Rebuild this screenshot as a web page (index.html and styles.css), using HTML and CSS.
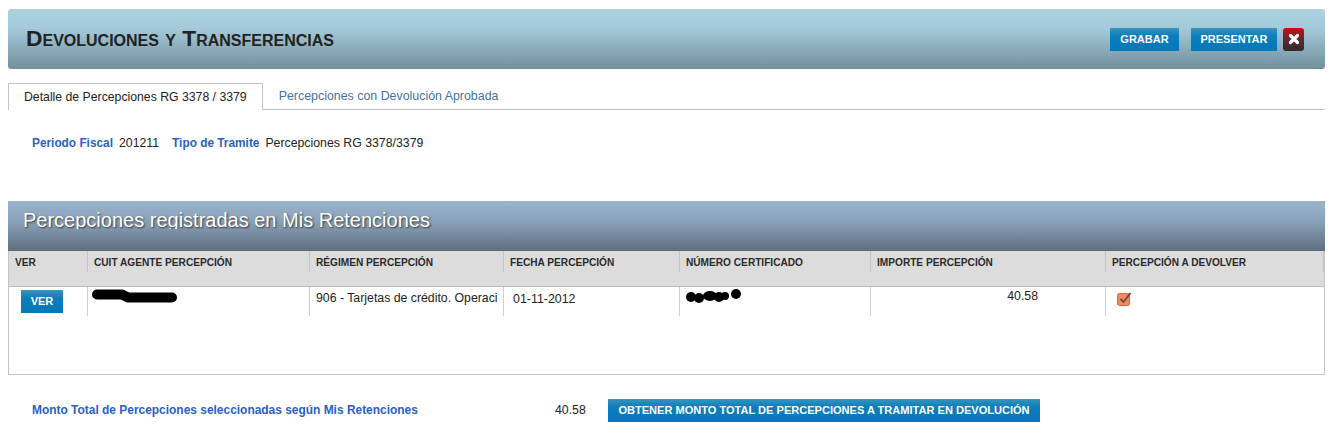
FILE: index.html
```html
<!DOCTYPE html>
<html lang="es">
<head>
    <meta charset="UTF-8">
    <meta name="viewport" content="width=device-width, initial-scale=1.0">
    <title>Devoluciones y Transferencias</title>
    <link rel="stylesheet" href="styles.css">
</head>
<body>
    <div class="page-header">
        <h1 class="page-title">Devoluciones y Transferencias</h1>
        <div class="header-actions">
            <a href="#" class="btn btn-grabar">GRABAR</a>
            <a href="#" class="btn btn-presentar">PRESENTAR</a>
            <a href="#" class="btn-close" aria-label="Cerrar">
                <svg width="14" height="14" viewBox="0 0 14 14"><path d="M3.5 3.5L10.5 10.5M10.5 3.5L3.5 10.5" stroke="#fff" stroke-width="3.2" stroke-linecap="round"/></svg>
            </a>
        </div>
    </div>

    <div class="tabs">
        <a href="#" class="tab active">Detalle de Percepciones RG 3378 / 3379</a>
        <a href="#" class="tab">Percepciones con Devolución Aprobada</a>
    </div>

    <div class="filters">
        <span class="label">Periodo Fiscal</span>
        <span class="value">201211</span>
        <span class="label label-tipo">Tipo de Tramite</span>
        <span class="value">Percepciones RG 3378/3379</span>
    </div>

    <div class="section-title"><span class="section-text">Percepciones registradas en Mis Retenciones</span></div>

    <div class="grid-box">
        <div class="grid-row grid-head">
            <div class="th">VER</div>
            <div class="th">CUIT AGENTE PERCEPCIÓN</div>
            <div class="th">RÉGIMEN PERCEPCIÓN</div>
            <div class="th">FECHA PERCEPCIÓN</div>
            <div class="th">NÚMERO CERTIFICADO</div>
            <div class="th">IMPORTE PERCEPCIÓN</div>
            <div class="th">PERCEPCIÓN A DEVOLVER</div>
        </div>
        <div class="grid-row grid-body">
            <div class="td td-ver"><a href="#" class="btn btn-ver">VER</a></div>
            <div class="td td-blob">
                <svg width="86" height="14" viewBox="0 0 86 14"><path d="M5 5.5H30L36 8.5H80" stroke="#000" stroke-width="10" stroke-linecap="round" stroke-linejoin="round" fill="none"/></svg>
            </div>
            <div class="td td-regimen"><span class="clip">906 - Tarjetas de crédito. Operaciones</span></div>
            <div class="td td-fecha">01-11-2012</div>
            <div class="td td-blob-cert">
                <svg width="58" height="16" viewBox="0 0 58 16"><g fill="#000"><circle cx="5" cy="9" r="5"/><circle cx="13" cy="10" r="5"/><ellipse cx="24" cy="8" rx="7" ry="5"/><circle cx="33" cy="9" r="5"/><circle cx="39" cy="8" r="4"/><circle cx="50" cy="6" r="5"/></g></svg>
            </div>
            <div class="td td-importe">40.58</div>
            <div class="td td-check">
                <svg width="15" height="15" viewBox="0 0 15 15"><rect x="0.5" y="2.5" width="12" height="12" rx="2" fill="#ee8a5c" stroke="#d9673a"/><path d="M3.5 8L6.5 11L13.5 2" stroke="#6b4a3e" stroke-width="1.8" fill="none"/></svg>
            </div>
        </div>
    </div>

    <div class="totals">
        <span class="label total-label">Monto Total de Percepciones seleccionadas según Mis Retenciones</span>
        <span class="value total-value">40.58</span>
        <a href="#" class="btn btn-total">OBTENER MONTO TOTAL DE PERCEPCIONES A TRAMITAR EN DEVOLUCIÓN</a>
    </div>
</body>
</html>
```

FILE: styles.css
```css
body {
    font-family: "Liberation Sans", Arial, sans-serif;
    font-size: 11px;
    margin: 0;
    padding: 9px 10px 0 8px;
    background: #fff;
    color: #222;
    height: 434px;
    overflow: hidden;
}
.page-header {
    display: flex;
    justify-content: space-between;
    align-items: center;
    height: 60px;
    border-radius: 3px;
    background: linear-gradient(#a9d1e0 0%, #a5cbda 30%, #71909c 100%);
}
.page-title {
    margin: 0 0 2px 18px;
    font-size: 22.8px;
    font-weight: bold;
    font-variant: small-caps;
    color: #222;
}
.header-actions {
    display: flex;
    align-items: center;
    margin-right: 21px;
}
.btn {
    display: block;
    background: linear-gradient(#3a93bd 0%, #0b7dbc 35%, #0478b8 100%);
    color: #fff;
    font-weight: bold;
    text-decoration: none;
    text-align: center;
}
.btn-grabar {
    width: 69px;
    height: 23px;
    line-height: 23px;
    margin-right: 12px;
}
.btn-presentar {
    width: 86px;
    height: 23px;
    line-height: 23px;
    margin-right: 6px;
}
.btn-close {
    display: flex;
    align-items: center;
    justify-content: center;
    width: 21px;
    height: 23px;
    border-radius: 3px;
    background: linear-gradient(#c90f12 0%, #5a2a30 55%, #33282c 100%);
}
.tabs {
    display: flex;
    height: 26px;
    margin-top: 14px;
    border-bottom: 1px solid #c4c4c4;
}
.tab {
    padding: 0 16px;
    line-height: 27px;
    color: #47739a;
    font-size: 12.4px;
    text-decoration: none;
}
.tab.active {
    height: 26px;
    padding: 0 15px;
    line-height: 26px;
    background: #fff;
    color: #222;
    font-size: 12.25px;
    border: 1px solid #c4c4c4;
    border-bottom: none;
    margin-bottom: -1px;
}
.filters {
    margin-top: 27px;
    padding-left: 24px;
    height: 13px;
    line-height: 13px;
    font-size: 12.3px;
    display: flex;
}
.label {
    color: #2a5fc4;
    font-weight: bold;
    font-size: 11.85px;
}
.value {
    margin-left: 6px;
    color: #222;
}
.label-tipo {
    margin-left: 13px;
}
.section-title {
    margin-top: 51px;
    height: 50px;
    padding-left: 15px;
    background: linear-gradient(#9ab4cd 0%, #8aa2b9 40%, #5e6e7e 100%);
}
.section-text {
    display: block;
    height: 28px;
    padding-top: 8px;
    box-sizing: border-box;
    overflow: hidden;
    font-size: 20px;
    line-height: 22px;
    color: #fff;
    text-shadow: 1px 1px 2px #333;
}
.grid-box {
    height: 123px;
    border: 1px solid #c4c4c4;
    border-top: none;
}
.grid-row {
    display: grid;
    grid-template-columns: 79px 222px 194px 176px 191px 235px 1fr;
}
.grid-head {
    height: 35px;
    background: #dcdcdc;
    border-bottom: 1px solid #bcbcbc;
}
.th {
    height: 21px;
    padding: 6px 0 0 6px;
    box-sizing: border-box;
    border-right: 1px solid #c4c4c4;
    font-size: 10.15px;
    font-weight: bold;
    color: #2b2b2b;
}
.grid-body {
    height: 29px;
}
.td {
    border-right: 1px solid #d0d0d0;
    box-sizing: border-box;
    color: #222;
    font-size: 12.3px;
    padding-left: 6px;
}
.td:last-child {
    border-right: none;
}
.td-ver {
    padding: 3px 0 0 12px;
}
.btn-ver {
    width: 42px;
    height: 23px;
    line-height: 23px;
    font-size: 11px;
}
.td-blob {
    padding: 2px 0 0 4px;
}
.td-regimen {
    padding: 4px 6px 0 6px;
}
.clip {
    display: block;
    white-space: nowrap;
    overflow: hidden;
}
.td-fecha {
    padding: 5px 0 0 9px;
    font-size: 12.4px;
}
.td-blob-cert {
    padding: 1px 0 0 6px;
}
.td-importe {
    text-align: right;
    padding: 2px 67px 0 0;
}
.td-check {
    padding: 4px 0 0 11px;
}
.totals {
    display: flex;
    align-items: center;
    height: 23px;
    margin-top: 24px;
    padding-left: 24px;
}
.total-label {
    width: 523px;
    padding-bottom: 2px;
    font-size: 11.95px;
}
.total-value {
    width: 53px;
    margin-left: 0;
    font-size: 12.3px;
    padding-bottom: 2px;
}
.btn-total {
    width: 432px;
    height: 23px;
    line-height: 23px;
    font-size: 11.05px;
}
```
